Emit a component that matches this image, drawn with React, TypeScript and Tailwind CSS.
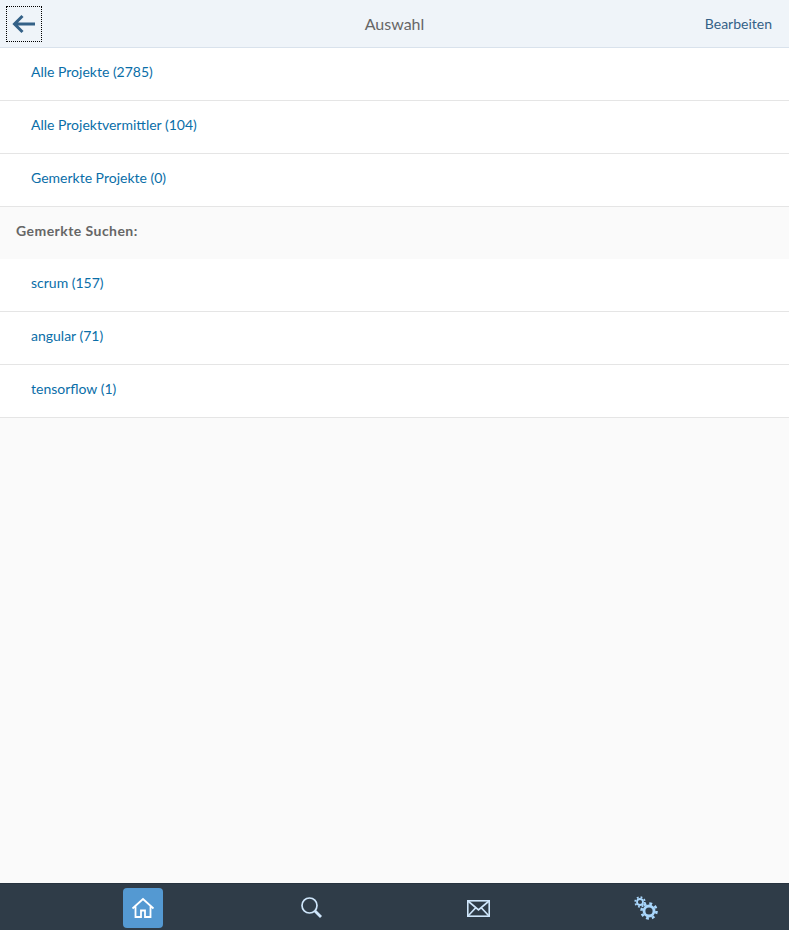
const font = "[font-family:Lato,sans-serif]";

function Row({ label }: { label: string }) {
  return (
    <a className="flex h-[53px] shrink-0 items-center border-b border-[#e5e5e5] bg-white pb-1 pl-[31px] text-sm text-[#0a6ea8]">
      {label}
    </a>
  );
}

export default function App() {
  return (
    <div className={`flex h-[930px] w-full flex-col overflow-hidden bg-[#fafafa] ${font}`}>
      <header className="relative flex h-12 shrink-0 items-center justify-between border-b border-[#d9e2ec] bg-[#eff4f9] pr-[17px] pl-1.5">
        <button className="flex h-9 w-9 items-center justify-center border border-dotted border-black">
          <svg width="24" height="20" viewBox="0 0 24 20" fill="none" stroke="#346187" strokeWidth="3">
            <path d="M2 10H23M10.500 2 2.500 10l8 8" />
          </svg>
        </button>
        <h1 className="absolute left-0 right-0 text-center text-base leading-none font-normal text-[#666666]">Auswahl</h1>
        <span className="text-sm text-[#346187]">Bearbeiten</span>
      </header>
      <Row label="Alle Projekte (2785)" />
      <Row label="Alle Projektvermittler (104)" />
      <Row label="Gemerkte Projekte (0)" />
      <div className="flex h-[52px] shrink-0 items-center pb-1 pl-4 text-sm font-bold tracking-[0.45px] text-[#666666]">Gemerkte Suchen:</div>
      <Row label="scrum (157)" />
      <Row label="angular (71)" />
      <Row label="tensorflow (1)" />
      <div className="flex-1" />
      <nav className="flex h-[47px] shrink-0 items-end border-t border-[#27333f] bg-[#2f3c48] pb-0.5">
        <div className="ml-[123px] flex h-10 w-10 items-center justify-center rounded-sm bg-[#5499d2]">
          <svg width="24" height="22" viewBox="0 0 24 22" fill="none" stroke="#fff" strokeWidth="1.800">
            <path d="M1.500 11.500 12 2l10.500 9.500M4.500 9.500V20h5.500v-6.500h4V20h5.500V9.500" />
          </svg>
        </div>
        <div className="ml-[137px] flex h-10 w-6 items-center justify-center">
          <svg width="22" height="22" viewBox="0 0 22 22" fill="none" stroke="#cfe6fb" strokeWidth="1.700">
            <circle cx="8.500" cy="8.500" r="7.500" />
            <path d="m14 14 6 6" strokeWidth="2.800" />
          </svg>
        </div>
        <div className="ml-[143px] flex h-10 w-[23px] items-center justify-center">
          <svg width="23" height="17" viewBox="0 0 23 17" fill="none" stroke="#cfe6fb" strokeWidth="1.700">
            <rect x="0.750" y="0.750" width="21.500" height="15.500" />
            <path d="m1 1 10.500 9L22 1M1 16l7.500-8M22 16l-7.500-8" />
          </svg>
        </div>
        <div className="ml-[144px] flex h-10 w-6 items-center justify-center">
          <svg width="24" height="24" viewBox="0 0 24 24" fill="none" stroke="#a9d6fb">
            <circle cx="6" cy="6" r="3" strokeWidth="1.800" />
            <circle cx="6" cy="6" r="4.800" strokeWidth="1.800" strokeDasharray="1.800 1.970" />
            <circle cx="15" cy="15" r="5" strokeWidth="2.800" />
            <circle cx="15" cy="15" r="7.500" strokeWidth="2.600" strokeDasharray="2.900 3" />
          </svg>
        </div>
      </nav>
    </div>
  );
}
